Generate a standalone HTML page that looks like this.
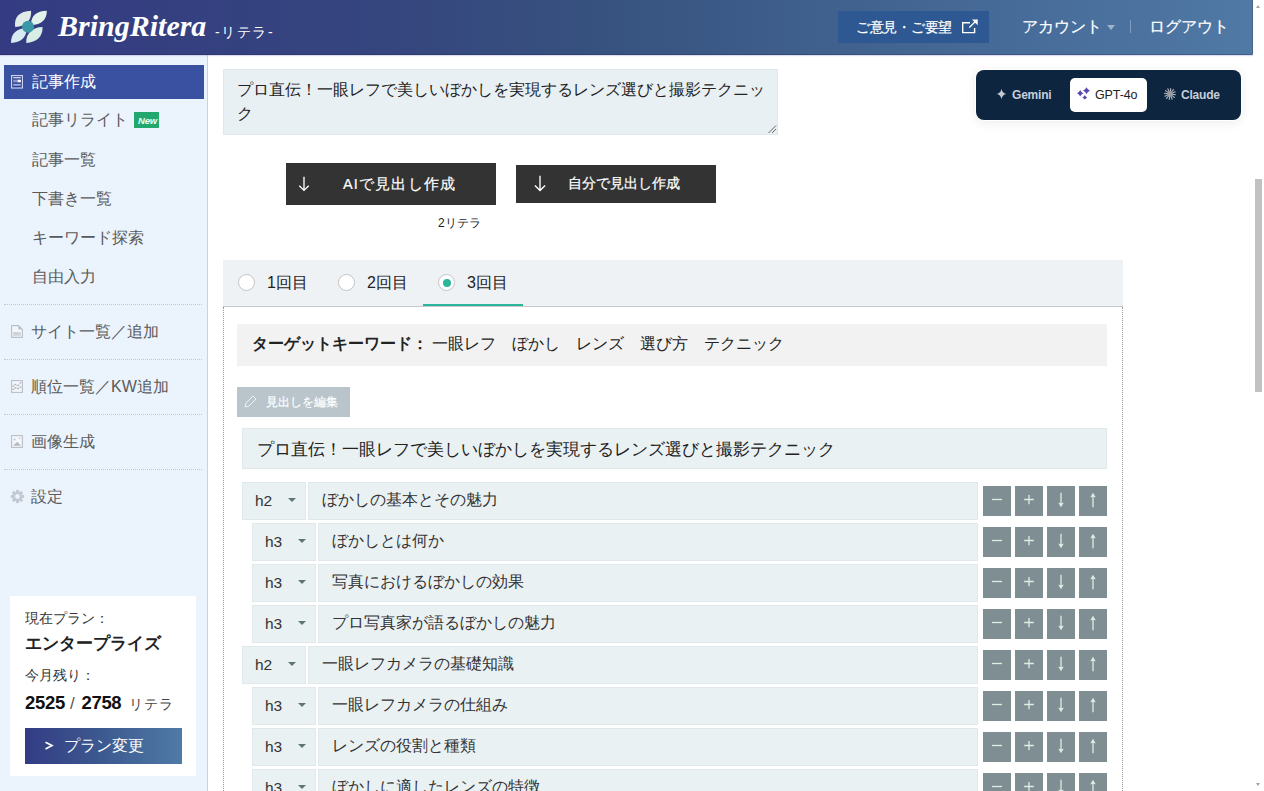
<!DOCTYPE html>
<html><head><meta charset="utf-8">
<style>
*{box-sizing:border-box;margin:0;padding:0}
html,body{width:1264px;height:791px;overflow:hidden;background:#fff;font-family:"Liberation Sans",sans-serif;color:#222}
.abs{position:absolute}
#hdr{z-index:5;left:0;top:0;width:1253px;height:55px;background:linear-gradient(90deg,#343b82 0%,#35457e 30%,#37527f 48%,#41628f 68%,#5079a6 100%);box-shadow:0 1px 1px rgba(120,120,190,0.25);border-bottom:1px solid rgba(20,25,60,0.25);border-right:1px solid #4b6686}
#sb{left:0;top:54px;width:208px;height:737px;background:#ebf3fc;border-right:1px solid #cdd2da}
.nav{position:absolute;left:32px;font-size:16px;color:#5a5a5a;white-space:nowrap;line-height:20px}
.sep{position:absolute;left:4px;width:198px;height:0;border-top:1px dotted #c4c8cc}
.nav2{position:absolute;left:31px;font-size:16px;color:#5a5a5a;white-space:nowrap;line-height:20px}
.ico{position:absolute;left:10px}
#scroll{left:1253px;top:0;width:11px;height:791px;background:#fff}
.btnsq{position:absolute;width:28px;height:30px;background:#7f8e93;color:#e8f4ec;font-size:18px;text-align:center;line-height:30px}
.sel{position:absolute;height:38px;width:64px;background:#eaf1f3;border:1px solid #e0e8eb;font-size:16px;color:#333}
.inp{position:absolute;height:38px;background:#eaf1f3;border:1px solid #e0e8eb;font-size:16px;color:#333;line-height:36px;white-space:nowrap}
.caret{position:absolute;width:0;height:0;border-left:4px solid transparent;border-right:4px solid transparent;border-top:4px solid #5f7479}
</style></head><body>
<!-- header -->
<div id="hdr" class="abs">
  <svg class="abs" style="left:0;top:0" width="60" height="54" viewBox="0 0 60 54">
    <path d="M15.2 27 C13.8 17 19.5 11.2 31.1 10.8 C31.8 20 26.5 26.2 15.2 27Z" fill="#e1ece9"/>
    <path d="M31 25.2 C30.6 16 36.5 11 46.8 10.8 C47 19.5 41.5 24.8 31 25.2Z" fill="#e3f3ea"/>
    <path d="M11 42.9 C10.8 34 16.5 28.2 26.6 28 C27 37 21 42.6 11 42.9Z" fill="#d6ebf2"/>
    <path d="M26.2 42.9 C25.8 33.8 32 27.2 42.6 27 C42.8 36.5 36.5 42.6 26.2 42.9Z" fill="#d7ede6"/>
    <circle cx="28" cy="26.8" r="6" fill="#3b97a5"/>
  </svg>
  <div class="abs" style="left:58px;top:9px;font-family:'Liberation Serif',serif;font-weight:bold;font-style:italic;font-size:30px;color:#fff;white-space:nowrap;letter-spacing:0px">BringRitera</div>
  <div class="abs" style="left:215px;top:24px;font-size:14px;color:#fff;white-space:nowrap;letter-spacing:1.6px">-リテラ-</div>
  <div class="abs" style="left:838px;top:11px;width:151px;height:32px;background:#2e5891"></div>
  <div class="abs" style="left:856px;top:18px;font-size:14.3px;color:#fff;white-space:nowrap;-webkit-text-stroke:0.2px #fff;letter-spacing:-0.3px">ご意見・ご要望</div>
  <svg class="abs" style="left:960px;top:17px" width="20" height="20" viewBox="0 0 20 20"><path d="M10 5.7H2.7V15.6H14.6V11" fill="none" stroke="#fff" stroke-width="1.4"/><path d="M9.3 10.5L17 3" fill="none" stroke="#fff" stroke-width="1.4"/><path d="M12 2.5H17.7V8.3Z" fill="#fff"/></svg>
  <div class="abs" style="left:1022px;top:17px;font-size:15.7px;color:#fff;white-space:nowrap;-webkit-text-stroke:0.2px #fff">アカウント</div>
  <div class="abs" style="left:1107px;top:25px;width:0;height:0;border-left:4px solid transparent;border-right:4px solid transparent;border-top:5px solid #9fb3cc"></div>
  <div class="abs" style="left:1130px;top:20px;width:1px;height:13px;background:#7f9bbd"></div>
  <div class="abs" style="left:1149px;top:17px;font-size:15.7px;color:#fff;white-space:nowrap;-webkit-text-stroke:0.2px #fff">ログアウト</div>
</div>
<!-- scrollbar -->
<div id="scroll" class="abs">
  <div class="abs" style="left:3px;top:5px;width:0;height:0;border-left:2.5px solid transparent;border-right:2.5px solid transparent;border-bottom:3px solid #a3a3a3"></div>
  <div class="abs" style="left:2px;top:179px;width:7px;height:213px;background:#c1c1c1"></div>
  <div class="abs" style="left:3px;top:783px;width:0;height:0;border-left:2.5px solid transparent;border-right:2.5px solid transparent;border-top:3px solid #a3a3a3"></div>
</div>
<!-- sidebar -->
<div id="sb" class="abs">
  <div class="abs" style="left:4px;top:11px;width:200px;height:34px;background:#3a50a0"></div>
  <svg class="abs" style="left:11px;top:21px" width="12" height="14" viewBox="0 0 12 14"><rect x="0.6" y="0.6" width="10.8" height="12.4" fill="#2c3f8c" stroke="#c9d2f6" stroke-width="1.2"/><rect x="2.2" y="2.2" width="7.6" height="1.1" fill="#eef1fd"/><rect x="2.2" y="4.6" width="7.6" height="2.8" fill="#8696d4"/><rect x="6.8" y="4.8" width="3" height="2.4" fill="#fff"/><rect x="2.2" y="8.8" width="7.6" height="2" fill="#9aa8df"/></svg>
  <div class="nav" style="top:18px;color:#fff">記事作成</div>
  <div class="nav" style="top:56px">記事リライト</div>
  <div class="abs" style="left:134px;top:58px;width:25px;height:16px;background:#22a86e;color:#f0fff6;font-size:9.5px;font-weight:bold;font-style:italic;text-align:center;line-height:18px;padding-left:2px;letter-spacing:-0.2px">New</div>
  <div class="nav" style="top:96px">記事一覧</div>
  <div class="nav" style="top:135px">下書き一覧</div>
  <div class="nav" style="top:174px">キーワード探索</div>
  <div class="nav" style="top:213px">自由入力</div>
  <div class="sep" style="top:250px"></div>
  <div class="nav2" style="top:268px">サイト一覧／追加</div>
  <div class="sep" style="top:305px"></div>
  <div class="nav2" style="top:323px">順位一覧／KW追加</div>
  <div class="sep" style="top:360px"></div>
  <div class="nav2" style="top:378px">画像生成</div>
  <div class="sep" style="top:415px"></div>
  <div class="nav2" style="top:433px">設定</div>
  <!-- small icons -->
  <svg class="abs" style="left:11px;top:271px" width="12" height="13" viewBox="0 0 12 13"><path d="M0.6 0.6H7.4L11.4 4.6V12.4H0.6Z" fill="#f3f6fb" stroke="#b9bec7" stroke-width="1.1"/><path d="M7.4 0.6V4.6H11.4Z" fill="#b9bec7"/><rect x="2" y="7" width="7.8" height="3.8" fill="#cfd4dc"/></svg>
  <svg class="abs" style="left:11px;top:326px" width="12" height="13" viewBox="0 0 12 13"><rect x="0.6" y="0.6" width="10.8" height="11.8" fill="#f3f6fb" stroke="#b9bec7" stroke-width="1.1"/><path d="M2.2 6.3L4.3 4.5L7 5.6L9.6 2.8M2.2 9.5L4.3 7.8L7 8.6L9.6 7" fill="none" stroke="#c4c9d1" stroke-width="0.9"/><g fill="#a9aeb8"><circle cx="2.2" cy="6.3" r="0.8"/><circle cx="4.3" cy="4.5" r="0.8"/><circle cx="7" cy="5.6" r="0.8"/><circle cx="9.6" cy="2.8" r="0.8"/><circle cx="2.2" cy="9.5" r="0.8"/><circle cx="4.3" cy="7.8" r="0.8"/><circle cx="7" cy="8.6" r="0.8"/><circle cx="9.6" cy="7" r="0.8"/></g></svg>
  <svg class="abs" style="left:11px;top:381px" width="12" height="13" viewBox="0 0 12 13"><rect x="0.6" y="0.6" width="10.8" height="11.8" fill="#f3f6fb" stroke="#b9bec7" stroke-width="1.1"/><path d="M2 10.8L6.3 6.8L10 10.8Z" fill="#b4b9c3"/><circle cx="3.6" cy="4.4" r="1" fill="#c0c5cd"/><circle cx="8.6" cy="3.2" r="0.8" fill="#c0c5cd"/></svg>
  <svg class="abs" style="left:10px;top:435px" width="15" height="15" viewBox="-7.5 -7.5 15 15"><g fill="#c3c8d2"><rect x="-1.5" y="-6.6" width="3" height="3" transform="rotate(0)"/><rect x="-1.5" y="-6.6" width="3" height="3" transform="rotate(45)"/><rect x="-1.5" y="-6.6" width="3" height="3" transform="rotate(90)"/><rect x="-1.5" y="-6.6" width="3" height="3" transform="rotate(135)"/><rect x="-1.5" y="-6.6" width="3" height="3" transform="rotate(180)"/><rect x="-1.5" y="-6.6" width="3" height="3" transform="rotate(225)"/><rect x="-1.5" y="-6.6" width="3" height="3" transform="rotate(270)"/><rect x="-1.5" y="-6.6" width="3" height="3" transform="rotate(315)"/><circle r="4.8"/></g><circle r="2.4" fill="#ebf3fc"/></svg>
  <!-- plan box -->
  <div class="abs" style="left:10px;top:542px;width:186px;height:180px;background:#fff"></div>
  <div class="abs" style="left:25px;top:556px;font-size:14px;color:#333;white-space:nowrap">現在プラン：</div>
  <div class="abs" style="left:25px;top:578px;font-size:17px;font-weight:bold;color:#222;white-space:nowrap">エンタープライズ</div>
  <div class="abs" style="left:25px;top:613px;font-size:14px;color:#333;white-space:nowrap">今月残り：</div>
  <div class="abs" style="left:25px;top:638px;font-size:18.5px;font-weight:bold;color:#111;white-space:nowrap;letter-spacing:-0.3px">2525<span style="font-weight:normal;color:#555;font-size:17px;margin:0 7px 0 5px">/</span>2758<span style="font-size:14px;font-weight:normal;color:#444;margin-left:8px;letter-spacing:0.6px">リテラ</span></div>
  <div class="abs" style="left:25px;top:674px;width:157px;height:36px;background:linear-gradient(90deg,#333c84,#3d5a90 50%,#4f7aa6)"></div>
  <svg class="abs" style="left:44px;top:687px" width="10" height="10" viewBox="0 0 10 10"><path d="M1.5 1.2L8 4.6L1.5 8" fill="none" stroke="#fff" stroke-width="1.7"/></svg><div class="abs" style="left:64px;top:682px;font-size:15.5px;color:#fff;white-space:nowrap">プラン変更</div>
</div>
<!-- main -->
<div class="abs" style="left:223px;top:69px;width:555px;height:66px;background:#e9f0f3;border:1px solid #e0e8ec"></div>
<div class="abs" style="left:237px;top:78px;font-size:16px;line-height:23.5px;color:#222;white-space:nowrap">プロ直伝！一眼レフで美しいぼかしを実現するレンズ選びと撮影テクニッ<br>ク</div>
<svg class="abs" style="left:767px;top:124px" width="10" height="10" viewBox="0 0 10 10"><path d="M9 1.5L1.5 9M9 5L5 9" stroke="#555" stroke-width="0.9"/></svg>

<div class="abs" style="left:286px;top:163px;width:210px;height:42px;background:#333"></div>
<svg class="abs" style="left:298.2px;top:176.3px" width="12" height="17" viewBox="0 0 12 17"><path d="M6 0.7V14.4M1.3 9.7L6 14.4L10.7 9.7" fill="none" stroke="#fff" stroke-width="1.35"/></svg>
<div class="abs" style="left:343px;top:175px;font-size:14.5px;color:#fff;-webkit-text-stroke:0.2px #fff;letter-spacing:1.2px;white-space:nowrap">AIで見出し作成</div>
<div class="abs" style="left:516px;top:165px;width:200px;height:38px;background:#333"></div>
<svg class="abs" style="left:534.4px;top:175px" width="12" height="17" viewBox="0 0 12 17"><path d="M6 0.7V15.6M0.9 10.6L6 15.6L11.1 10.6" fill="none" stroke="#fff" stroke-width="1.35"/></svg>
<div class="abs" style="left:568px;top:175px;font-size:14px;color:#fff;-webkit-text-stroke:0.25px #fff;white-space:nowrap">自分で見出し作成</div>
<div class="abs" style="left:438px;top:215px;font-size:12px;color:#222;white-space:nowrap">2リテラ</div>

<!-- model selector -->
<div class="abs" style="left:976px;top:70px;width:265px;height:50px;background:#0e2540;border-radius:8px;box-shadow:0 0 0 1px #fff,0 2px 12px rgba(0,0,0,0.09)"></div>
<div class="abs" style="left:1070px;top:78px;width:77px;height:34px;background:#fff;border-radius:5px"></div>
<svg class="abs" style="left:996px;top:88px" width="11" height="12" viewBox="0 0 11 12"><path d="M5.5 0.8 Q6.2 5.2 10.2 6 Q6.2 6.8 5.5 11.2 Q4.8 6.8 0.8 6 Q4.8 5.2 5.5 0.8Z" fill="#c6cad2"/></svg>
<div class="abs" style="left:1012px;top:88px;font-size:12px;font-weight:bold;color:#c5cedb;white-space:nowrap;letter-spacing:-0.2px">Gemini</div>
<svg class="abs" style="left:1074px;top:85px" width="18" height="18" viewBox="0 0 18 18"><path d="M6.2 5.1000000000000005 Q7.096 7.404000000000001 9.4 8.3 Q7.096 9.196000000000002 6.2 11.5 Q5.304 9.196000000000002 3.0 8.3 Q5.304 7.404000000000001 6.2 5.1000000000000005Z" fill="#5a44b4"/><path d="M12.5 2.3 Q13.48 4.819999999999999 16.0 5.8 Q13.48 6.78 12.5 9.3 Q11.52 6.78 9.0 5.8 Q11.52 4.819999999999999 12.5 2.3Z" fill="#5a44b4"/><path d="M10.8 10.0 Q11.472000000000001 11.728 13.200000000000001 12.4 Q11.472000000000001 13.072000000000001 10.8 14.8 Q10.128 13.072000000000001 8.4 12.4 Q10.128 11.728 10.8 10.0Z" fill="#5a44b4"/></svg>
<div class="abs" style="left:1095px;top:88px;font-size:12.5px;color:#222;white-space:nowrap;letter-spacing:-0.1px">GPT-4o</div>
<svg class="abs" style="left:1163px;top:87px" width="14" height="14" viewBox="0 0 14 14"><line x1="9.18" y1="7.29" x2="12.55" y2="7.73" stroke="#b4b9c0" stroke-width="1.1" stroke-linecap="round"/><line x1="8.75" y1="8.34" x2="11.45" y2="10.41" stroke="#b4b9c0" stroke-width="1.1" stroke-linecap="round"/><line x1="7.84" y1="9.03" x2="9.15" y2="12.17" stroke="#b4b9c0" stroke-width="1.1" stroke-linecap="round"/><line x1="6.71" y1="9.18" x2="6.27" y2="12.55" stroke="#b4b9c0" stroke-width="1.1" stroke-linecap="round"/><line x1="5.66" y1="8.75" x2="3.59" y2="11.45" stroke="#b4b9c0" stroke-width="1.1" stroke-linecap="round"/><line x1="4.97" y1="7.84" x2="1.83" y2="9.15" stroke="#b4b9c0" stroke-width="1.1" stroke-linecap="round"/><line x1="4.82" y1="6.71" x2="1.45" y2="6.27" stroke="#b4b9c0" stroke-width="1.1" stroke-linecap="round"/><line x1="5.25" y1="5.66" x2="2.55" y2="3.59" stroke="#b4b9c0" stroke-width="1.1" stroke-linecap="round"/><line x1="6.16" y1="4.97" x2="4.85" y2="1.83" stroke="#b4b9c0" stroke-width="1.1" stroke-linecap="round"/><line x1="7.29" y1="4.82" x2="7.73" y2="1.45" stroke="#b4b9c0" stroke-width="1.1" stroke-linecap="round"/><line x1="8.34" y1="5.25" x2="10.41" y2="2.55" stroke="#b4b9c0" stroke-width="1.1" stroke-linecap="round"/><line x1="9.03" y1="6.16" x2="12.17" y2="4.85" stroke="#b4b9c0" stroke-width="1.1" stroke-linecap="round"/><circle cx="7" cy="7" r="2.6" fill="#9a9ea4"/></svg>
<div class="abs" style="left:1181px;top:88px;font-size:12px;font-weight:bold;color:#c5cedb;white-space:nowrap;letter-spacing:-0.2px">Claude</div>

<!-- tabs -->
<div class="abs" style="left:223px;top:260px;width:900px;height:47px;background:#eff2f5;border-bottom:1px solid #c8c8c8"></div>
<div class="abs" style="left:238px;top:274px;width:17px;height:17px;border-radius:50%;background:#fff;border:1px solid #c4c4c4"></div>
<div class="abs" style="left:267px;top:273px;font-size:16px;color:#222;white-space:nowrap">1回目</div>
<div class="abs" style="left:338px;top:274px;width:17px;height:17px;border-radius:50%;background:#fff;border:1px solid #c4c4c4"></div>
<div class="abs" style="left:367px;top:273px;font-size:16px;color:#222;white-space:nowrap">2回目</div>
<div class="abs" style="left:438px;top:274px;width:17px;height:17px;border-radius:50%;background:#fff;border:1px solid #c4c4c4"></div>
<div class="abs" style="left:442.5px;top:278.5px;width:8px;height:8px;border-radius:50%;background:#2bb59a"></div>
<div class="abs" style="left:467px;top:273px;font-size:16px;color:#222;white-space:nowrap">3回目</div>
<div class="abs" style="left:423px;top:304px;width:100px;height:2px;background:#2bb59a"></div>

<!-- panel -->
<div class="abs" style="left:223px;top:307px;width:900px;height:500px;border-left:1px dotted #999;border-right:1px dotted #999"></div>
<div class="abs" style="left:237px;top:324px;width:870px;height:42px;background:#f2f2f2"></div>
<div class="abs" style="left:252px;top:334px;font-size:16px;color:#222;white-space:nowrap"><b>ターゲットキーワード：</b> 一眼レフ　ぼかし　レンズ　選び方　テクニック</div>

<div class="abs" style="left:237px;top:387px;width:113px;height:30px;background:#b9c5cb"></div>
<svg class="abs" style="left:244px;top:395px" width="13" height="13" viewBox="0 0 13 13"><path d="M1 12L2 8L9 1L12 4L5 11Z" fill="none" stroke="#eef2f4" stroke-width="1"/></svg>
<div class="abs" style="left:266px;top:394px;font-size:12px;color:#fff;white-space:nowrap;-webkit-text-stroke:0.2px #fff">見出しを編集</div>

<div class="abs" style="left:242px;top:428px;width:865px;height:41px;background:#eaf1f3;border:1px solid #e0e8eb"></div>
<div class="abs" style="left:257px;top:437px;font-size:17.4px;color:#222;white-space:nowrap">プロ直伝！一眼レフで美しいぼかしを実現するレンズ選びと撮影テクニック</div>

<div class="sel" style="left:242px;top:482px"></div>
<div class="abs" style="left:255px;top:492px;font-size:15.5px;color:#333">h2</div>
<div class="caret" style="left:288px;top:498px"></div>
<div class="inp" style="left:308px;top:482px;width:670px"></div>
<div class="abs" style="left:322px;top:490px;font-size:16px;color:#333;white-space:nowrap">ぼかしの基本とその魅力</div>
<div class="btnsq" style="left:983px;top:486px"><svg width="28" height="30" viewBox="0 0 28 30"><path d="M9 13.5H19" stroke="#dcefe4" stroke-width="1.3"/></svg></div>
<div class="btnsq" style="left:1015px;top:486px"><svg width="28" height="30" viewBox="0 0 28 30"><path d="M9.2 13.5H18.8M14 8.9V18.2" stroke="#dcefe4" stroke-width="1.3"/></svg></div>
<div class="btnsq" style="left:1047px;top:486px"><svg width="28" height="30" viewBox="0 0 28 30"><path d="M14 6.8V19" stroke="#dcefe4" stroke-width="1.3"/><path d="M11.2 16.6Q14 18 16.8 16.6L14 21.3Z" fill="#dcefe4"/></svg></div>
<div class="btnsq" style="left:1079px;top:486px"><svg width="28" height="30" viewBox="0 0 28 30"><path d="M14 9V21.2" stroke="#dcefe4" stroke-width="1.3"/><path d="M11.2 11.4Q14 10 16.8 11.4L14 6.7Z" fill="#dcefe4"/></svg></div>
<div class="sel" style="left:252px;top:523px"></div>
<div class="abs" style="left:265px;top:533px;font-size:15.5px;color:#333">h3</div>
<div class="caret" style="left:298px;top:539px"></div>
<div class="inp" style="left:318px;top:523px;width:660px"></div>
<div class="abs" style="left:332px;top:531px;font-size:16px;color:#333;white-space:nowrap">ぼかしとは何か</div>
<div class="btnsq" style="left:983px;top:527px"><svg width="28" height="30" viewBox="0 0 28 30"><path d="M9 13.5H19" stroke="#dcefe4" stroke-width="1.3"/></svg></div>
<div class="btnsq" style="left:1015px;top:527px"><svg width="28" height="30" viewBox="0 0 28 30"><path d="M9.2 13.5H18.8M14 8.9V18.2" stroke="#dcefe4" stroke-width="1.3"/></svg></div>
<div class="btnsq" style="left:1047px;top:527px"><svg width="28" height="30" viewBox="0 0 28 30"><path d="M14 6.8V19" stroke="#dcefe4" stroke-width="1.3"/><path d="M11.2 16.6Q14 18 16.8 16.6L14 21.3Z" fill="#dcefe4"/></svg></div>
<div class="btnsq" style="left:1079px;top:527px"><svg width="28" height="30" viewBox="0 0 28 30"><path d="M14 9V21.2" stroke="#dcefe4" stroke-width="1.3"/><path d="M11.2 11.4Q14 10 16.8 11.4L14 6.7Z" fill="#dcefe4"/></svg></div>
<div class="sel" style="left:252px;top:564px"></div>
<div class="abs" style="left:265px;top:574px;font-size:15.5px;color:#333">h3</div>
<div class="caret" style="left:298px;top:580px"></div>
<div class="inp" style="left:318px;top:564px;width:660px"></div>
<div class="abs" style="left:332px;top:572px;font-size:16px;color:#333;white-space:nowrap">写真におけるぼかしの効果</div>
<div class="btnsq" style="left:983px;top:568px"><svg width="28" height="30" viewBox="0 0 28 30"><path d="M9 13.5H19" stroke="#dcefe4" stroke-width="1.3"/></svg></div>
<div class="btnsq" style="left:1015px;top:568px"><svg width="28" height="30" viewBox="0 0 28 30"><path d="M9.2 13.5H18.8M14 8.9V18.2" stroke="#dcefe4" stroke-width="1.3"/></svg></div>
<div class="btnsq" style="left:1047px;top:568px"><svg width="28" height="30" viewBox="0 0 28 30"><path d="M14 6.8V19" stroke="#dcefe4" stroke-width="1.3"/><path d="M11.2 16.6Q14 18 16.8 16.6L14 21.3Z" fill="#dcefe4"/></svg></div>
<div class="btnsq" style="left:1079px;top:568px"><svg width="28" height="30" viewBox="0 0 28 30"><path d="M14 9V21.2" stroke="#dcefe4" stroke-width="1.3"/><path d="M11.2 11.4Q14 10 16.8 11.4L14 6.7Z" fill="#dcefe4"/></svg></div>
<div class="sel" style="left:252px;top:605px"></div>
<div class="abs" style="left:265px;top:615px;font-size:15.5px;color:#333">h3</div>
<div class="caret" style="left:298px;top:621px"></div>
<div class="inp" style="left:318px;top:605px;width:660px"></div>
<div class="abs" style="left:332px;top:613px;font-size:16px;color:#333;white-space:nowrap">プロ写真家が語るぼかしの魅力</div>
<div class="btnsq" style="left:983px;top:609px"><svg width="28" height="30" viewBox="0 0 28 30"><path d="M9 13.5H19" stroke="#dcefe4" stroke-width="1.3"/></svg></div>
<div class="btnsq" style="left:1015px;top:609px"><svg width="28" height="30" viewBox="0 0 28 30"><path d="M9.2 13.5H18.8M14 8.9V18.2" stroke="#dcefe4" stroke-width="1.3"/></svg></div>
<div class="btnsq" style="left:1047px;top:609px"><svg width="28" height="30" viewBox="0 0 28 30"><path d="M14 6.8V19" stroke="#dcefe4" stroke-width="1.3"/><path d="M11.2 16.6Q14 18 16.8 16.6L14 21.3Z" fill="#dcefe4"/></svg></div>
<div class="btnsq" style="left:1079px;top:609px"><svg width="28" height="30" viewBox="0 0 28 30"><path d="M14 9V21.2" stroke="#dcefe4" stroke-width="1.3"/><path d="M11.2 11.4Q14 10 16.8 11.4L14 6.7Z" fill="#dcefe4"/></svg></div>
<div class="sel" style="left:242px;top:646px"></div>
<div class="abs" style="left:255px;top:656px;font-size:15.5px;color:#333">h2</div>
<div class="caret" style="left:288px;top:662px"></div>
<div class="inp" style="left:308px;top:646px;width:670px"></div>
<div class="abs" style="left:322px;top:654px;font-size:16px;color:#333;white-space:nowrap">一眼レフカメラの基礎知識</div>
<div class="btnsq" style="left:983px;top:650px"><svg width="28" height="30" viewBox="0 0 28 30"><path d="M9 13.5H19" stroke="#dcefe4" stroke-width="1.3"/></svg></div>
<div class="btnsq" style="left:1015px;top:650px"><svg width="28" height="30" viewBox="0 0 28 30"><path d="M9.2 13.5H18.8M14 8.9V18.2" stroke="#dcefe4" stroke-width="1.3"/></svg></div>
<div class="btnsq" style="left:1047px;top:650px"><svg width="28" height="30" viewBox="0 0 28 30"><path d="M14 6.8V19" stroke="#dcefe4" stroke-width="1.3"/><path d="M11.2 16.6Q14 18 16.8 16.6L14 21.3Z" fill="#dcefe4"/></svg></div>
<div class="btnsq" style="left:1079px;top:650px"><svg width="28" height="30" viewBox="0 0 28 30"><path d="M14 9V21.2" stroke="#dcefe4" stroke-width="1.3"/><path d="M11.2 11.4Q14 10 16.8 11.4L14 6.7Z" fill="#dcefe4"/></svg></div>
<div class="sel" style="left:252px;top:687px"></div>
<div class="abs" style="left:265px;top:697px;font-size:15.5px;color:#333">h3</div>
<div class="caret" style="left:298px;top:703px"></div>
<div class="inp" style="left:318px;top:687px;width:660px"></div>
<div class="abs" style="left:332px;top:695px;font-size:16px;color:#333;white-space:nowrap">一眼レフカメラの仕組み</div>
<div class="btnsq" style="left:983px;top:691px"><svg width="28" height="30" viewBox="0 0 28 30"><path d="M9 13.5H19" stroke="#dcefe4" stroke-width="1.3"/></svg></div>
<div class="btnsq" style="left:1015px;top:691px"><svg width="28" height="30" viewBox="0 0 28 30"><path d="M9.2 13.5H18.8M14 8.9V18.2" stroke="#dcefe4" stroke-width="1.3"/></svg></div>
<div class="btnsq" style="left:1047px;top:691px"><svg width="28" height="30" viewBox="0 0 28 30"><path d="M14 6.8V19" stroke="#dcefe4" stroke-width="1.3"/><path d="M11.2 16.6Q14 18 16.8 16.6L14 21.3Z" fill="#dcefe4"/></svg></div>
<div class="btnsq" style="left:1079px;top:691px"><svg width="28" height="30" viewBox="0 0 28 30"><path d="M14 9V21.2" stroke="#dcefe4" stroke-width="1.3"/><path d="M11.2 11.4Q14 10 16.8 11.4L14 6.7Z" fill="#dcefe4"/></svg></div>
<div class="sel" style="left:252px;top:728px"></div>
<div class="abs" style="left:265px;top:738px;font-size:15.5px;color:#333">h3</div>
<div class="caret" style="left:298px;top:744px"></div>
<div class="inp" style="left:318px;top:728px;width:660px"></div>
<div class="abs" style="left:332px;top:736px;font-size:16px;color:#333;white-space:nowrap">レンズの役割と種類</div>
<div class="btnsq" style="left:983px;top:732px"><svg width="28" height="30" viewBox="0 0 28 30"><path d="M9 13.5H19" stroke="#dcefe4" stroke-width="1.3"/></svg></div>
<div class="btnsq" style="left:1015px;top:732px"><svg width="28" height="30" viewBox="0 0 28 30"><path d="M9.2 13.5H18.8M14 8.9V18.2" stroke="#dcefe4" stroke-width="1.3"/></svg></div>
<div class="btnsq" style="left:1047px;top:732px"><svg width="28" height="30" viewBox="0 0 28 30"><path d="M14 6.8V19" stroke="#dcefe4" stroke-width="1.3"/><path d="M11.2 16.6Q14 18 16.8 16.6L14 21.3Z" fill="#dcefe4"/></svg></div>
<div class="btnsq" style="left:1079px;top:732px"><svg width="28" height="30" viewBox="0 0 28 30"><path d="M14 9V21.2" stroke="#dcefe4" stroke-width="1.3"/><path d="M11.2 11.4Q14 10 16.8 11.4L14 6.7Z" fill="#dcefe4"/></svg></div>
<div class="sel" style="left:252px;top:769px"></div>
<div class="abs" style="left:265px;top:779px;font-size:15.5px;color:#333">h3</div>
<div class="caret" style="left:298px;top:785px"></div>
<div class="inp" style="left:318px;top:769px;width:660px"></div>
<div class="abs" style="left:332px;top:777px;font-size:16px;color:#333;white-space:nowrap">ぼかしに適したレンズの特徴</div>
<div class="btnsq" style="left:983px;top:773px"><svg width="28" height="30" viewBox="0 0 28 30"><path d="M9 13.5H19" stroke="#dcefe4" stroke-width="1.3"/></svg></div>
<div class="btnsq" style="left:1015px;top:773px"><svg width="28" height="30" viewBox="0 0 28 30"><path d="M9.2 13.5H18.8M14 8.9V18.2" stroke="#dcefe4" stroke-width="1.3"/></svg></div>
<div class="btnsq" style="left:1047px;top:773px"><svg width="28" height="30" viewBox="0 0 28 30"><path d="M14 6.8V19" stroke="#dcefe4" stroke-width="1.3"/><path d="M11.2 16.6Q14 18 16.8 16.6L14 21.3Z" fill="#dcefe4"/></svg></div>
<div class="btnsq" style="left:1079px;top:773px"><svg width="28" height="30" viewBox="0 0 28 30"><path d="M14 9V21.2" stroke="#dcefe4" stroke-width="1.3"/><path d="M11.2 11.4Q14 10 16.8 11.4L14 6.7Z" fill="#dcefe4"/></svg></div>
</body></html>
